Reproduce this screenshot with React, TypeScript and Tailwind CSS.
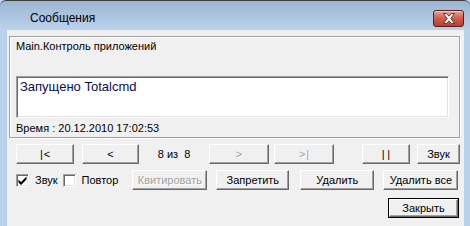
import React from "react";

function Btn({
  w,
  children,
  disabled,
  def,
  className = "",
}: {
  w: string;
  children: React.ReactNode;
  disabled?: boolean;
  def?: boolean;
  className?: string;
}) {
  const inner = (
    <div
      className={
        "h-full w-full flex items-center justify-center bg-[#f0f0f0] border border-t-white border-l-white border-r-[#696969] border-b-[#696969] shadow-[inset_-1px_-1px_0_#a0a0a0] text-[11px] leading-none whitespace-pre " +
        (disabled ? "text-[#a0a0a0] [text-shadow:1px_1px_0_#ffffff]" : "text-black")
      }
    >
      {children}
    </div>
  );
  if (def) {
    return (
      <div className={"h-[20px] border border-black " + w + " " + className}>{inner}</div>
    );
  }
  return <div className={"h-[20px] " + w + " " + className}>{inner}</div>;
}

function Check({ checked }: { checked?: boolean }) {
  return (
    <div className="w-[13px] h-[13px] bg-white border border-t-[#a0a0a0] border-l-[#a0a0a0] border-r-white border-b-white shadow-[inset_1px_1px_0_#696969,inset_-1px_-1px_0_#e3e3e3] flex items-center justify-center">
      {checked && (
        <svg width="9" height="9" viewBox="0 0 9 9">
          <path d="M0.5 3.5 L3 6 L8.5 0.5 L8.5 3.5 L3 9 L0.5 6.5 Z" fill="#000" />
        </svg>
      )}
    </div>
  );
}

export default function App() {
  return (
    <div className="w-[470px] h-[226px] overflow-hidden bg-[#b9d1ea] font-['Liberation_Sans',Arial,sans-serif]">
      {/* title bar */}
      <div className="h-[30px] bg-gradient-to-b from-[#9cb6d3] to-[#bad1ea] border-t border-[#3c3c3c] rounded-t-[6px] flex items-start">
        <span className="ml-[30px] mt-[10px] text-[12px] leading-[14px] text-black">Сообщения</span>
        <div className="ml-auto mr-[6px] mt-[9px] w-[31px] h-[17px] rounded-[3px] border border-[#5a1c1c] bg-gradient-to-b from-[#e6a397] via-[#cd5a4a] to-[#b9402f] shadow-[inset_0_1px_0_rgba(255,255,255,0.5)] flex items-center justify-center">
          <svg width="14" height="11" viewBox="0 0 14 11">
            <path
              d="M1.5 0.5 H4.5 L7 3.2 L9.5 0.5 H12.5 L8.8 5.5 L12.5 10.5 H9.5 L7 7.8 L4.5 10.5 H1.5 L5.2 5.5 Z"
              fill="#ffffff"
              stroke="#5b3a3a"
              strokeWidth="1"
            />
          </svg>
        </div>
      </div>

      {/* client area */}
      <div className="ml-[7px] w-[457px] h-[196px] bg-[#f0f0f0] flex flex-col">
        {/* group box */}
        <div className="ml-[2px] mt-[6px] w-[451px] h-[102px] border border-[#a0a0a0] shadow-[inset_1px_1px_0_#ffffff,1px_1px_0_#ffffff] flex flex-col">
          <div className="ml-[6px] mt-[2px] text-[11px] leading-[14px] text-black">Main.Контроль приложений</div>
          <div className="ml-[6px] mt-[23px] w-[433px] h-[42px] bg-white border border-t-[#a0a0a0] border-l-[#a0a0a0] border-r-white border-b-white shadow-[inset_1px_1px_0_#696969,inset_-1px_-1px_0_#e3e3e3] px-[3px] pt-[2px] text-[13px] leading-[16px] text-[#0c0c50]">
            Запущено Totalcmd
          </div>
          <div className="ml-[6px] mt-[3px] text-[11px] leading-[14px] text-black">Время : 20.12.2010 17:02:53</div>
        </div>

        {/* row 1 */}
        <div className="mt-[6px] pl-[9px] flex items-center">
          <Btn w="w-[58px]">{"|\u200A<"}</Btn>
          <Btn w="w-[57px]" className="ml-[8px]">&lt;</Btn>
          <div className="w-[70px] text-center text-[11px] leading-none text-black whitespace-pre">8 из  8</div>
          <Btn w="w-[60px]" disabled>&gt;</Btn>
          <Btn w="w-[60px]" className="ml-[5px]" disabled>{">\u200A|"}</Btn>
          <Btn w="w-[48px]" className="ml-[28px]">{"|\u2005|"}</Btn>
          <Btn w="w-[43px]" className="ml-[7px]">Звук</Btn>
        </div>

        {/* row 2 */}
        <div className="mt-[6px] pl-[9px] flex items-center">
          <Check checked />
          <span className="ml-[6px] text-[11px] leading-none text-black">Звук</span>
          <div className="ml-[5px]">
            <Check />
          </div>
          <span className="ml-[6px] text-[11px] leading-none text-black">Повтор</span>
          <Btn w="w-[75px]" className="ml-[14px]" disabled>Квитировать</Btn>
          <Btn w="w-[73px]" className="ml-[9px]">Запретить</Btn>
          <Btn w="w-[74px]" className="ml-[11px]">Удалить</Btn>
          <Btn w="w-[75px]" className="ml-[9px]">Удалить все</Btn>
        </div>

        {/* row 3 */}
        <div className="mt-[8px] pl-[381px] flex">
          <Btn w="w-[71px]" def>Закрыть</Btn>
        </div>
      </div>
    </div>
  );
}
